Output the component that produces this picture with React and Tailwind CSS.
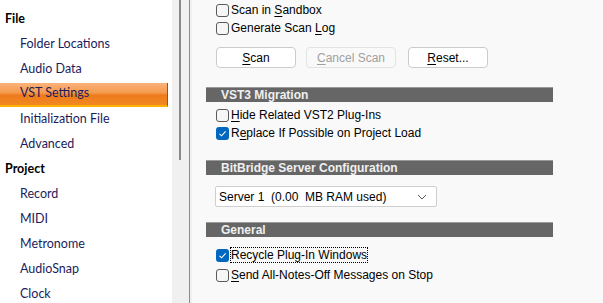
import React from 'react';

const tree = [
  { label: 'File', head: true },
  { label: 'Folder Locations' },
  { label: 'Audio Data' },
  { label: 'VST Settings', selected: true },
  { label: 'Initialization File' },
  { label: 'Advanced' },
  { label: 'Project', head: true },
  { label: 'Record' },
  { label: 'MIDI' },
  { label: 'Metronome' },
  { label: 'AudioSnap' },
  { label: 'Clock' },
];

const U = ({ children }) => <span className="underline underline-offset-2">{children}</span>;

const Check = ({ checked }) =>
  checked ? (
    <span className="w-[13px] h-[13px] rounded-[3px] bg-[#0067c0] flex items-center justify-center shrink-0">
      <svg width="9" height="9" viewBox="0 0 9 9">
        <path d="M1.5 4.8 L3.6 6.8 L7.6 2.4" fill="none" stroke="white" strokeWidth="1.1" />
      </svg>
    </span>
  ) : (
    <span className="w-[13px] h-[13px] rounded-[3px] border border-[#5a5a5a] bg-[#f6f6f6] shrink-0" />
  );

const CheckRow = ({ checked, focus, children }) => (
  <div className="flex items-center gap-[2px] h-[18px] pl-[24px]">
    <Check checked={checked} />
    <span className={focus ? 'outline outline-1 outline-dotted outline-black leading-[14px]' : 'leading-[14px]'}>
      {children}
    </span>
  </div>
);

const Header = ({ children }) => (
  <div className="ml-[14px] w-[347px] h-[15px] bg-[#666666] border-t border-[#9a9a9a] pl-[15px] text-[12px] font-bold text-[#f0f0f0] leading-[14px]">
    {children}
  </div>
);

const Btn = ({ children, disabled, w }) => (
  <div
    className={`h-[21px] rounded-[4px] border flex items-center justify-center ${w} ${
      disabled ? 'border-[#e3e3e3] bg-[#f9f9f9] text-[#a0a0a0]' : 'border-[#cccccc] bg-white text-black'
    }`}
  >
    {children}
  </div>
);

export default function App() {
  return (
    <div className="w-[603px] h-[303px] flex overflow-hidden bg-white" style={{ fontFamily: '"Liberation Sans", Arial, sans-serif' }}>
      {/* Tree */}
      <div className="w-[172px] shrink-0 bg-white pt-[7px] text-[12.5px]" style={{ fontFamily: 'Lato, sans-serif' }}>
        {tree.map((t) =>
          t.selected ? (
            <div
              key={t.label}
              className="h-[24px] w-[168px] my-[0.5px] flex items-center pl-[20px] text-[#1c1c5c] border-r border-[#7a5c30] border-b-2 border-b-[#ffb000]"
              style={{ background: 'linear-gradient(#fbb27a, #f49a4e 45%, #ee7a1c 55%, #f08a20)' }}
            >
              {t.label}
            </div>
          ) : (
            <div
              key={t.label}
              className={`h-[25px] flex items-center ${t.head ? 'pl-[5px] font-bold text-black' : 'pl-[20px] text-[#1c1c5c]'}`}
            >
              {t.label}
            </div>
          )
        )}
      </div>

      {/* Scrollbar */}
      <div className="w-[17px] shrink-0 bg-[#f0f0f0] flex justify-center">
        <div className="w-[2px] h-[160px] bg-[#8a8a8a] ml-[-1px]" />
      </div>
      <div className="w-[1px] shrink-0 bg-[#8c8c8c]" />
      <div className="w-[2px] shrink-0 bg-[#f0f0f0]" />

      {/* Settings panel */}
      <div className="flex-1 bg-[#f9f9f9] text-[12px] text-black">
        <div className="pt-[1px]">
          <CheckRow>Scan in <U>S</U>andbox</CheckRow>
          <CheckRow>Generate Scan <U>L</U>og</CheckRow>
        </div>
        <div className="flex gap-[10px] pl-[24px] mt-[10px] mb-[19px]">
          <Btn w="w-[80px]"><U>S</U>can</Btn>
          <Btn w="w-[90px]" disabled><U>C</U>ancel Scan</Btn>
          <div className="ml-[2px]">
            <Btn w="w-[80px]"><U>R</U>eset...</Btn>
          </div>
        </div>
        <Header>VST3 Migration</Header>
        <div className="pt-[4px]">
          <CheckRow><U>H</U>ide Related VST2 Plug-Ins</CheckRow>
          <CheckRow checked>R<U>e</U>place If Possible on Project Load</CheckRow>
        </div>
        <div className="mt-[18px]">
          <Header>BitBridge Server Configuration</Header>
        </div>
        <div className="ml-[23px] mt-[11px] w-[222px] h-[21px] bg-white border border-[#cfcfcf] rounded-[2px] flex items-center justify-between pl-[3px] pr-[9px]">
          <span>Server 1&nbsp; (0.00&nbsp; MB RAM used)</span>
          <svg width="10" height="6" viewBox="0 0 10 6">
            <path d="M1 1 L5 5 L9 1" fill="none" stroke="#555" strokeWidth="1" />
          </svg>
        </div>
        <div className="mt-[15px]">
          <Header>General</Header>
        </div>
        <div className="pt-[9px]">
          <CheckRow checked focus>Recycle Plug-In Windows</CheckRow>
          <div className="h-[2px]" />
          <CheckRow><U>S</U>end All-Notes-Off Messages on Stop</CheckRow>
        </div>
      </div>
    </div>
  );
}
